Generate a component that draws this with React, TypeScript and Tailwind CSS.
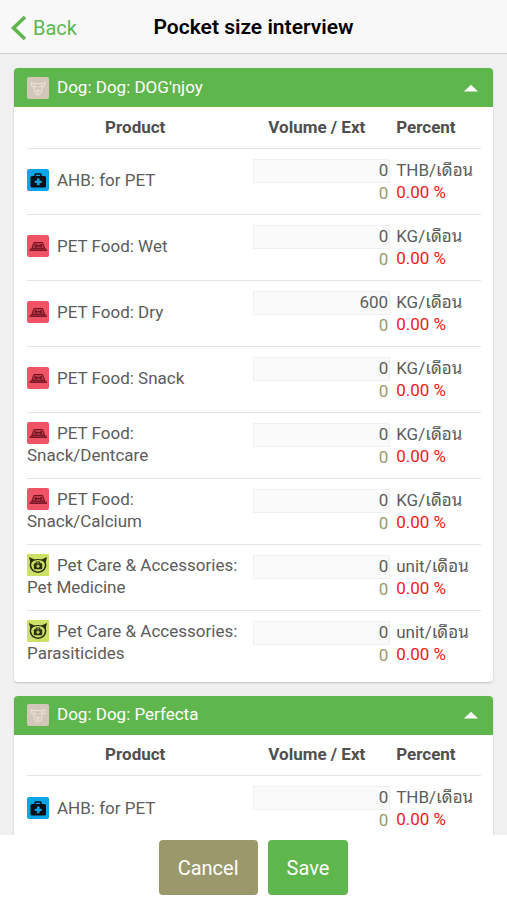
import React, { useState } from "react";

type Kind = "medical" | "food" | "care";

type Product = {
  kind: Kind;
  name: string;
  volume: number;
  unit: string;
};

const dogProducts: Product[] = [
  { kind: "medical", name: "AHB: for PET", volume: 0, unit: "THB/เดือน" },
  { kind: "food", name: "PET Food: Wet", volume: 0, unit: "KG/เดือน" },
  { kind: "food", name: "PET Food: Dry", volume: 600, unit: "KG/เดือน" },
  { kind: "food", name: "PET Food: Snack", volume: 0, unit: "KG/เดือน" },
  { kind: "food", name: "PET Food: Snack/Dentcare", volume: 0, unit: "KG/เดือน" },
  { kind: "food", name: "PET Food: Snack/Calcium", volume: 0, unit: "KG/เดือน" },
  { kind: "care", name: "Pet Care & Accessories: Pet Medicine", volume: 0, unit: "unit/เดือน" },
  { kind: "care", name: "Pet Care & Accessories: Parasiticides", volume: 0, unit: "unit/เดือน" },
];

const sections = [
  { title: "Dog: Dog: DOG'njoy", products: dogProducts },
  { title: "Dog: Dog: Perfecta", products: dogProducts.slice(0, 1) },
];

function DogIcon() {
  return (
    <svg viewBox="0 0 22 22" className="h-[22px] w-[22px] shrink-0" aria-hidden="true">
      <rect width="22" height="22" rx="2" fill="#d3c7ba" />
      <g fill="none" stroke="#ece5dd" strokeWidth="0.9" strokeLinejoin="round" strokeLinecap="round">
        <path d="M7.500 6.500 4 5.500l.8 4 2.200.5M14.500 6.500 18 5.500l-.8 4-2.200.5" />
        <path d="M7.500 6.500h7l.6 4.500-1 5-3.100 2.500L7.900 16l-1-5z" />
        <path d="M8.500 9.500l1.300.8M13.500 9.500l-1.300.8M9.500 13.500h3L11 15zM11 15v1.500" />
      </g>
    </svg>
  );
}

function ProductIcon({ kind }: { kind: Kind }) {
  const box = "mr-2 inline-block h-[22px] w-[22px] align-top";

  if (kind === "medical") {
    return (
      <svg viewBox="0 0 22 22" className={box} aria-hidden="true">
        <rect width="22" height="22" rx="2" fill="#0ba5e9" />
        <path d="M8 7.500V5.800Q8 5 8.800 5h4.400q.8 0 .8.800v1.700" fill="none" stroke="#071019" strokeWidth="1.500" />
        <rect x="3.500" y="7" width="15.500" height="11.500" rx="1.500" fill="#071019" />
        <path d="M10 9.500h2.500v2.200h2.200v2.400h-2.200v2.200H10v-2.200H7.800v-2.400H10z" fill="#0ba5e9" />
      </svg>
    );
  }

  if (kind === "food") {
    return (
      <svg viewBox="0 0 22 22" className={box} aria-hidden="true">
        <rect width="22" height="22" rx="2" fill="#ee5366" />
        <path d="M5 13.300 6.800 8.200Q7 7.500 7.800 7.500h7q.8 0 1 .7l1.700 5.100z" fill="#c93a4b" stroke="#6f1522" strokeWidth="1.100" />
        <path d="M2.800 15.500q0-1.800 1.800-1.800h13.200q1.800 0 1.800 1.800z" fill="#a52c3c" stroke="#6f1522" strokeWidth="0.900" />
        <path d="M8.800 10.700h5" stroke="#6f1522" strokeWidth="1.400" />
        <g fill="#6f1522">
          <circle cx="8.600" cy="10" r="1" />
          <circle cx="8.600" cy="11.400" r="1" />
          <circle cx="14" cy="10" r="1" />
          <circle cx="14" cy="11.400" r="1" />
        </g>
      </svg>
    );
  }

  return (
    <svg viewBox="0 0 22 22" className={box} aria-hidden="true">
      <rect width="22" height="22" rx="1" fill="#cfe066" />
      <path d="M2 3 8 5.800 3.600 9.500zM20 3 14 5.800 18.400 9.500z" fill="#27300f" />
      <path d="M4.200 7.500C1.800 12.500 5 18.200 11 18.200s9.200-5.700 6.800-10.700" fill="none" stroke="#27300f" strokeWidth="1.400" />
      <path d="M7 6.100q4-1.200 8 0" fill="none" stroke="#27300f" strokeWidth="1.200" />
      <path d="M9.200 9.500V8.700q0-.7.700-.7h2.200q.7 0 .7.700v.8" fill="none" stroke="#27300f" strokeWidth="1.200" />
      <rect x="6.800" y="9.200" width="8.400" height="6" rx="1" fill="#27300f" />
      <path d="M11 10.500v3.400M9.300 12.200h3.400" stroke="#cfe066" strokeWidth="1.300" />
    </svg>
  );
}

function ProductRow({ product, last }: { product: Product; last: boolean }) {
  const [volume, setVolume] = useState(String(product.volume));

  return (
    <tr className={last ? "" : "border-b border-[#e4e4e4]"}>
      <td className="pt-[9px] pb-[11px] leading-[22px]">
        <ProductIcon kind={product.kind} />
        {product.name}
      </td>
      <td className="pt-2.5 pb-[11px] pl-1 text-right align-top">
        <input
          type="text"
          inputMode="numeric"
          aria-label={`${product.name} volume`}
          value={volume}
          onChange={(e) => setVolume(e.target.value)}
          className="block h-6 w-full border border-[#f0f0f0] bg-[#fafafa] pr-px text-right outline-none"
        />
        <span className="block pr-0.5 leading-5 text-[#9b996b]">0</span>
      </td>
      <td className="pt-2.5 pb-[11px] pl-1.5 align-top leading-[22px] whitespace-nowrap">
        <span className="block">{product.unit}</span>
        <span className="block text-[#f02020]">0.00 %</span>
      </td>
    </tr>
  );
}

function Section({ title, products }: { title: string; products: Product[] }) {
  const [open, setOpen] = useState(true);

  return (
    <section className="overflow-hidden rounded-sm bg-white shadow-[0_1px_2px_rgba(0,0,0,0.2)]">
      <button
        type="button"
        aria-expanded={open}
        onClick={() => setOpen(!open)}
        className="flex h-[39px] w-full items-center gap-2 bg-[#5fb64d] pr-3 pl-[13px] text-left text-white"
      >
        <DogIcon />
        <span className="flex-1">{title}</span>
        <svg viewBox="0 0 20 10" className={open ? "h-2 w-5" : "h-2 w-5 rotate-180"} aria-hidden="true">
          <path d="M10 1 19 9.500H1z" fill="#fff" />
        </svg>
      </button>

      {open && (
        <div className="pr-3 pb-1.5 pl-[13px]">
          <table className="w-full table-fixed border-collapse">
            <thead>
              <tr className="h-[41px] border-b border-[#e4e4e4] text-[#4f4f4f]">
                <th scope="col" className="w-[49%] pr-1.5 text-center font-bold">Product</th>
                <th scope="col" className="w-[31%] pr-2.5 pl-1 text-center font-bold">Volume / Ext</th>
                <th scope="col" className="w-[20%] pl-1.5 text-left font-bold">Percent</th>
              </tr>
            </thead>
            <tbody>
              {products.map((p, i) => (
                <ProductRow key={p.name} product={p} last={i === products.length - 1} />
              ))}
            </tbody>
          </table>
        </div>
      )}
    </section>
  );
}

export default function App() {
  return (
    <div className="flex h-screen flex-col bg-[#f0f0f0] font-[Roboto,'Noto_Sans_Thai_Looped','Noto_Looped_Thai','Droid_Sans_Thai',Loma,Waree,Garuda,sans-serif] text-[17px] text-[#5c5c5c]">
      {/* Top bar */}
      <header className="grid h-[54px] shrink-0 grid-cols-[1fr_auto_1fr] items-center border-b border-[#cfcfcf] bg-[#f8f8f8] px-2.5 pt-0.5">
        <a href="#back" className="flex items-center gap-[5px] text-xl text-[#5fb64d]">
          <svg viewBox="0 0 18 26" className="h-[26px] w-[18px]" aria-hidden="true">
            <path d="M15 2 3.500 13 15 24" fill="none" stroke="#5fb64d" strokeWidth="3.600" />
          </svg>
          Back
        </a>
        <h1 className="text-[21px] font-semibold text-black">Pocket size interview</h1>
      </header>

      {/* Product sections */}
      <main className="flex min-h-0 flex-1 flex-col gap-3.5 overflow-y-auto p-3.5 [scrollbar-width:none] *:shrink-0">
        {sections.map((s) => (
          <Section key={s.title} title={s.title} products={s.products} />
        ))}
      </main>

      {/* Actions */}
      <footer className="flex shrink-0 justify-center gap-2.5 bg-white py-[5px] text-xl text-white">
        <button type="button" className="h-[55px] rounded bg-[#9b996b] px-[19px]">
          Cancel
        </button>
        <button type="button" className="h-[55px] rounded bg-[#5fb64d] px-[19px]">
          Save
        </button>
      </footer>
    </div>
  );
}
